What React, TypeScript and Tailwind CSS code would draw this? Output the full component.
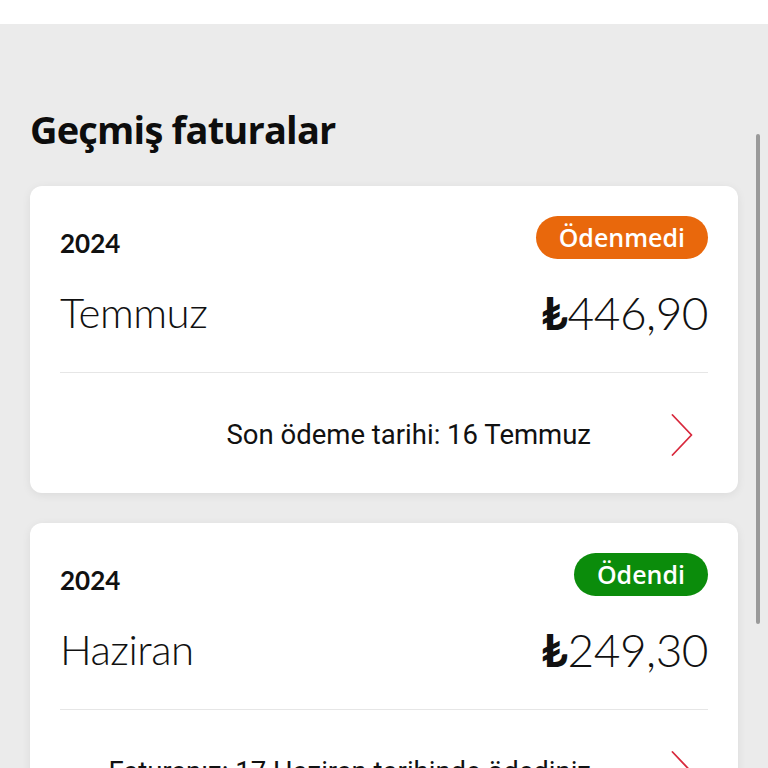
import React from 'react';

interface Invoice {
  year: string;
  month: string;
  amount: string;
  status: 'paid' | 'unpaid';
  note: string;
}

const invoices: Invoice[] = [
  {
    year: '2024',
    month: 'Temmuz',
    amount: '446,90',
    status: 'unpaid',
    note: 'Son ödeme tarihi: 16 Temmuz',
  },
  {
    year: '2024',
    month: 'Haziran',
    amount: '249,30',
    status: 'paid',
    note: 'Faturanız: 17 Haziran tarihinde ödediniz',
  },
];

const Chevron = () => (
  <svg width="22" height="42" viewBox="0 0 22 42" fill="none">
    <path d="M1.5 1 L20.5 21 L1.5 41" stroke="#d8283c" strokeWidth="1.8" strokeLinecap="round" strokeLinejoin="round" />
  </svg>
);

const InvoiceCard: React.FC<{ invoice: Invoice }> = ({ invoice }) => {
  const paid = invoice.status === 'paid';
  return (
    <div className="bg-white rounded-xl shadow-[0_2px_10px_rgba(0,0,0,0.07)] px-[30px] pt-[30px]">
      {/* Year + status */}
      <div className="flex items-center justify-between h-[43px]">
        <span className="text-[26px] font-bold text-[#111] font-['Lato',sans-serif] mt-[11px]">{invoice.year}</span>
        <span
          className={`h-[43px] rounded-full px-[23px] flex items-center text-white text-[25px] font-semibold font-['Open_Sans',sans-serif] ${
            paid ? 'bg-[#0b8c0b]' : 'bg-[#e9680c]'
          }`}
        >
          {paid ? 'Ödendi' : 'Ödenmedi'}
        </span>
      </div>

      {/* Month + amount */}
      <div className="flex items-center justify-between h-[56px] mt-[25px] font-['Lato',sans-serif] text-[#111]">
        <span className="text-[42px] font-light tracking-[-0.5px]">{invoice.month}</span>
        <span className="text-[46px] font-light tracking-[-0.5px]">
          <span className="font-bold">₺</span>
          {invoice.amount}
        </span>
      </div>

      <div className="h-px bg-[#e6e6e6] mt-[32px]" />

      {/* Note */}
      <div className="flex items-center justify-end h-10 mt-[42px] mb-[38px]">
        <span className="text-[27.5px] text-[#111] font-['Roboto',sans-serif] mr-[80px] whitespace-nowrap">
          {invoice.note}
        </span>
        <div className="mr-[15px] flex">
          <Chevron />
        </div>
      </div>
    </div>
  );
};

export default function App() {
  return (
    <div className="relative w-[768px] h-[768px] overflow-hidden bg-white">
      <div className="h-6 bg-white" />
      <div className="bg-[#ebebeb] h-full px-[30px] pt-[80px]">
        <h1 className="text-[38px] font-bold text-[#0d0d0d] font-['Open_Sans',sans-serif] tracking-[-0.8px] leading-[50px]">
          Geçmiş faturalar
        </h1>
        <div className="flex flex-col gap-[30px] mt-[32px]">
          {invoices.map((inv) => (
            <InvoiceCard key={inv.month} invoice={inv} />
          ))}
        </div>
      </div>
      {/* scroll indicator */}
      <div className="absolute left-[756px] top-[134px] w-1 h-[490px] rounded-full bg-[#9a9a9a]" />
    </div>
  );
}
